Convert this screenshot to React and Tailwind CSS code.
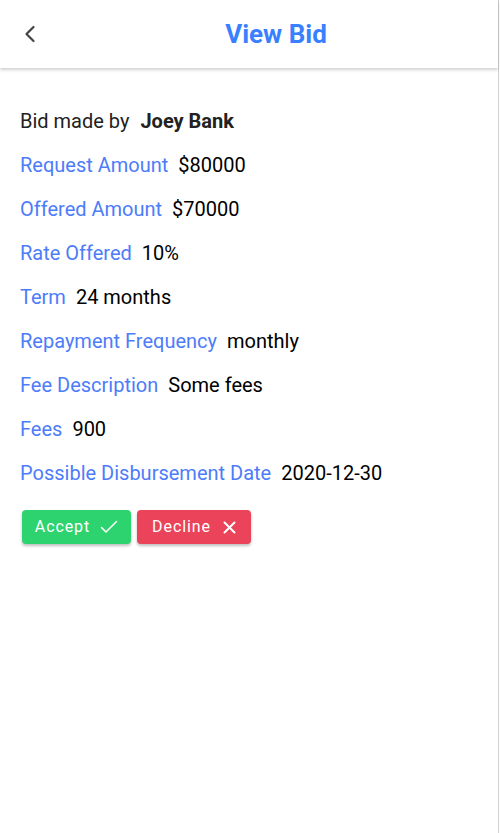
import { ChevronLeft } from "lucide-react";

const details = [
  { label: "Request Amount", value: "$80000" },
  { label: "Offered Amount", value: "$70000" },
  { label: "Rate Offered", value: "10%" },
  { label: "Term", value: "24 months" },
  { label: "Repayment Frequency", value: "monthly" },
  { label: "Fee Description", value: "Some fees" },
  { label: "Fees", value: "900" },
  { label: "Possible Disbursement Date", value: "2020-12-30" },
];

const ViewBid = () => {
  return (
    <div className="min-h-screen w-[500px] bg-white font-['Roboto',sans-serif]">
      <div className="min-h-[833px] w-[499px] border-r border-[#d0d0d0] bg-white">
        {/* Header */}
        <header className="flex h-[68px] items-center bg-white shadow-[0_2px_3px_rgba(0,0,0,0.18)]">
          <button className="flex h-[68px] w-[56px] items-center justify-center text-[#444]">
            <ChevronLeft size={28} strokeWidth={1.9} className="ml-[3px] -mt-[1px]" />
          </button>
          <h1 className="flex-1 pr-[2px] text-center text-[26px] font-bold text-[#3880ff]">
            View Bid
          </h1>
        </header>

        {/* Details */}
        <div className="px-[20px] pt-[31px]">
          <div className="flex h-[44px] items-center text-[20px] text-[#222]">
            <span>Bid made by</span>
            <span className="ml-[11px] font-bold">Joey Bank</span>
          </div>
          {details.map((d) => (
            <div key={d.label} className="flex h-[44px] items-center text-[20px]">
              <span className="text-[#4d7cf9]">{d.label}</span>
              <span className="ml-[10px] text-black">{d.value}</span>
            </div>
          ))}

          {/* Actions */}
          <div className="mt-[15px] flex gap-[6px] pl-[2px]">
            <button className="flex h-[34px] w-[109px] items-center justify-center gap-[10px] rounded-[4px] bg-[#2dd36f] text-[16px] tracking-[0.9px] text-white shadow-[0_2px_3px_rgba(0,0,0,0.25)]">
              Accept
              <svg width="18" height="14" viewBox="0 0 18 14" fill="none" stroke="white" strokeWidth="1.5" strokeLinecap="round" strokeLinejoin="round">
                <path d="M1.5 7.5 L6 12 L16.5 1.5" />
              </svg>
            </button>
            <button className="flex h-[34px] w-[114px] items-center justify-center gap-[12px] rounded-[4px] bg-[#eb445a] text-[16px] tracking-[0.9px] text-white shadow-[0_2px_3px_rgba(0,0,0,0.25)]">
              Decline
              <svg width="13" height="13" viewBox="0 0 13 13" fill="none" stroke="white" strokeWidth="2" strokeLinecap="round">
                <path d="M1.5 1.5 L11.5 11.5 M11.5 1.5 L1.5 11.5" />
              </svg>
            </button>
          </div>
        </div>
      </div>
    </div>
  );
};

export default ViewBid;
